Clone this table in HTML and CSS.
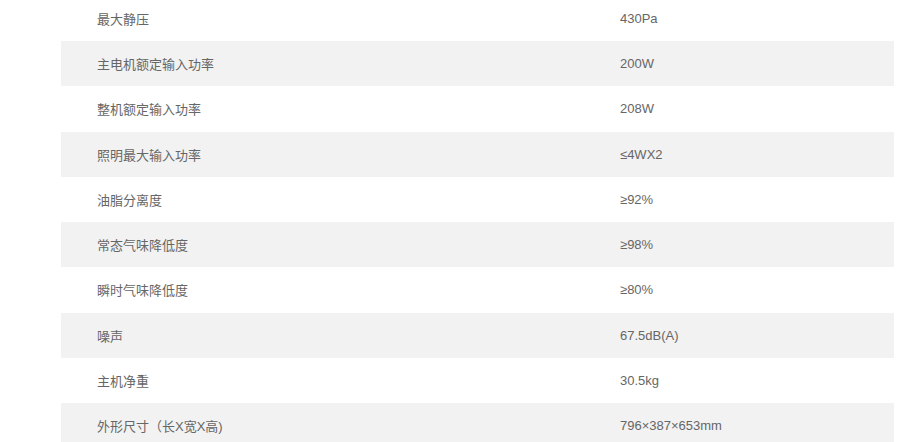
FILE: index.html
```html
<!DOCTYPE html>
<html lang="zh-CN">
<head>
<meta charset="utf-8">
<title>参数</title>
<link rel="stylesheet" href="styles.css">
</head>
<body>
<div class="specs">
  <div class="row"><div class="name">最大静压</div><div class="val">430Pa</div></div>
  <div class="row alt"><div class="name">主电机额定输入功率</div><div class="val">200W</div></div>
  <div class="row"><div class="name">整机额定输入功率</div><div class="val">208W</div></div>
  <div class="row alt"><div class="name">照明最大输入功率</div><div class="val">≤4WX2</div></div>
  <div class="row"><div class="name">油脂分离度</div><div class="val">≥92%</div></div>
  <div class="row alt"><div class="name">常态气味降低度</div><div class="val">≥98%</div></div>
  <div class="row"><div class="name">瞬时气味降低度</div><div class="val">≥80%</div></div>
  <div class="row alt"><div class="name">噪声</div><div class="val">67.5dB(A)</div></div>
  <div class="row"><div class="name">主机净重</div><div class="val">30.5kg</div></div>
  <div class="row alt"><div class="name">外形尺寸（长X宽X高)</div><div class="val">796×387×653mm</div></div>
</div>
</body>
</html>
```
FILE: styles.css
```css
html, body {
  margin: 0;
  padding: 0;
  background: #ffffff;
  overflow: hidden;
}
.specs {
  width: 833px;
  margin: -4.25px 0 0 61px;
  font-family: "Liberation Sans", Arial, "Noto Sans CJK SC", sans-serif;
  font-size: 13px;
  color: #666666;
}
.row {
  display: grid;
  grid-template-columns: 523px 1fr;
  align-items: center;
  height: 45.25px;
}
.row.alt {
  background: #f2f2f2;
}
.name, .val {
  padding-left: 36px;
  white-space: nowrap;
}
```
